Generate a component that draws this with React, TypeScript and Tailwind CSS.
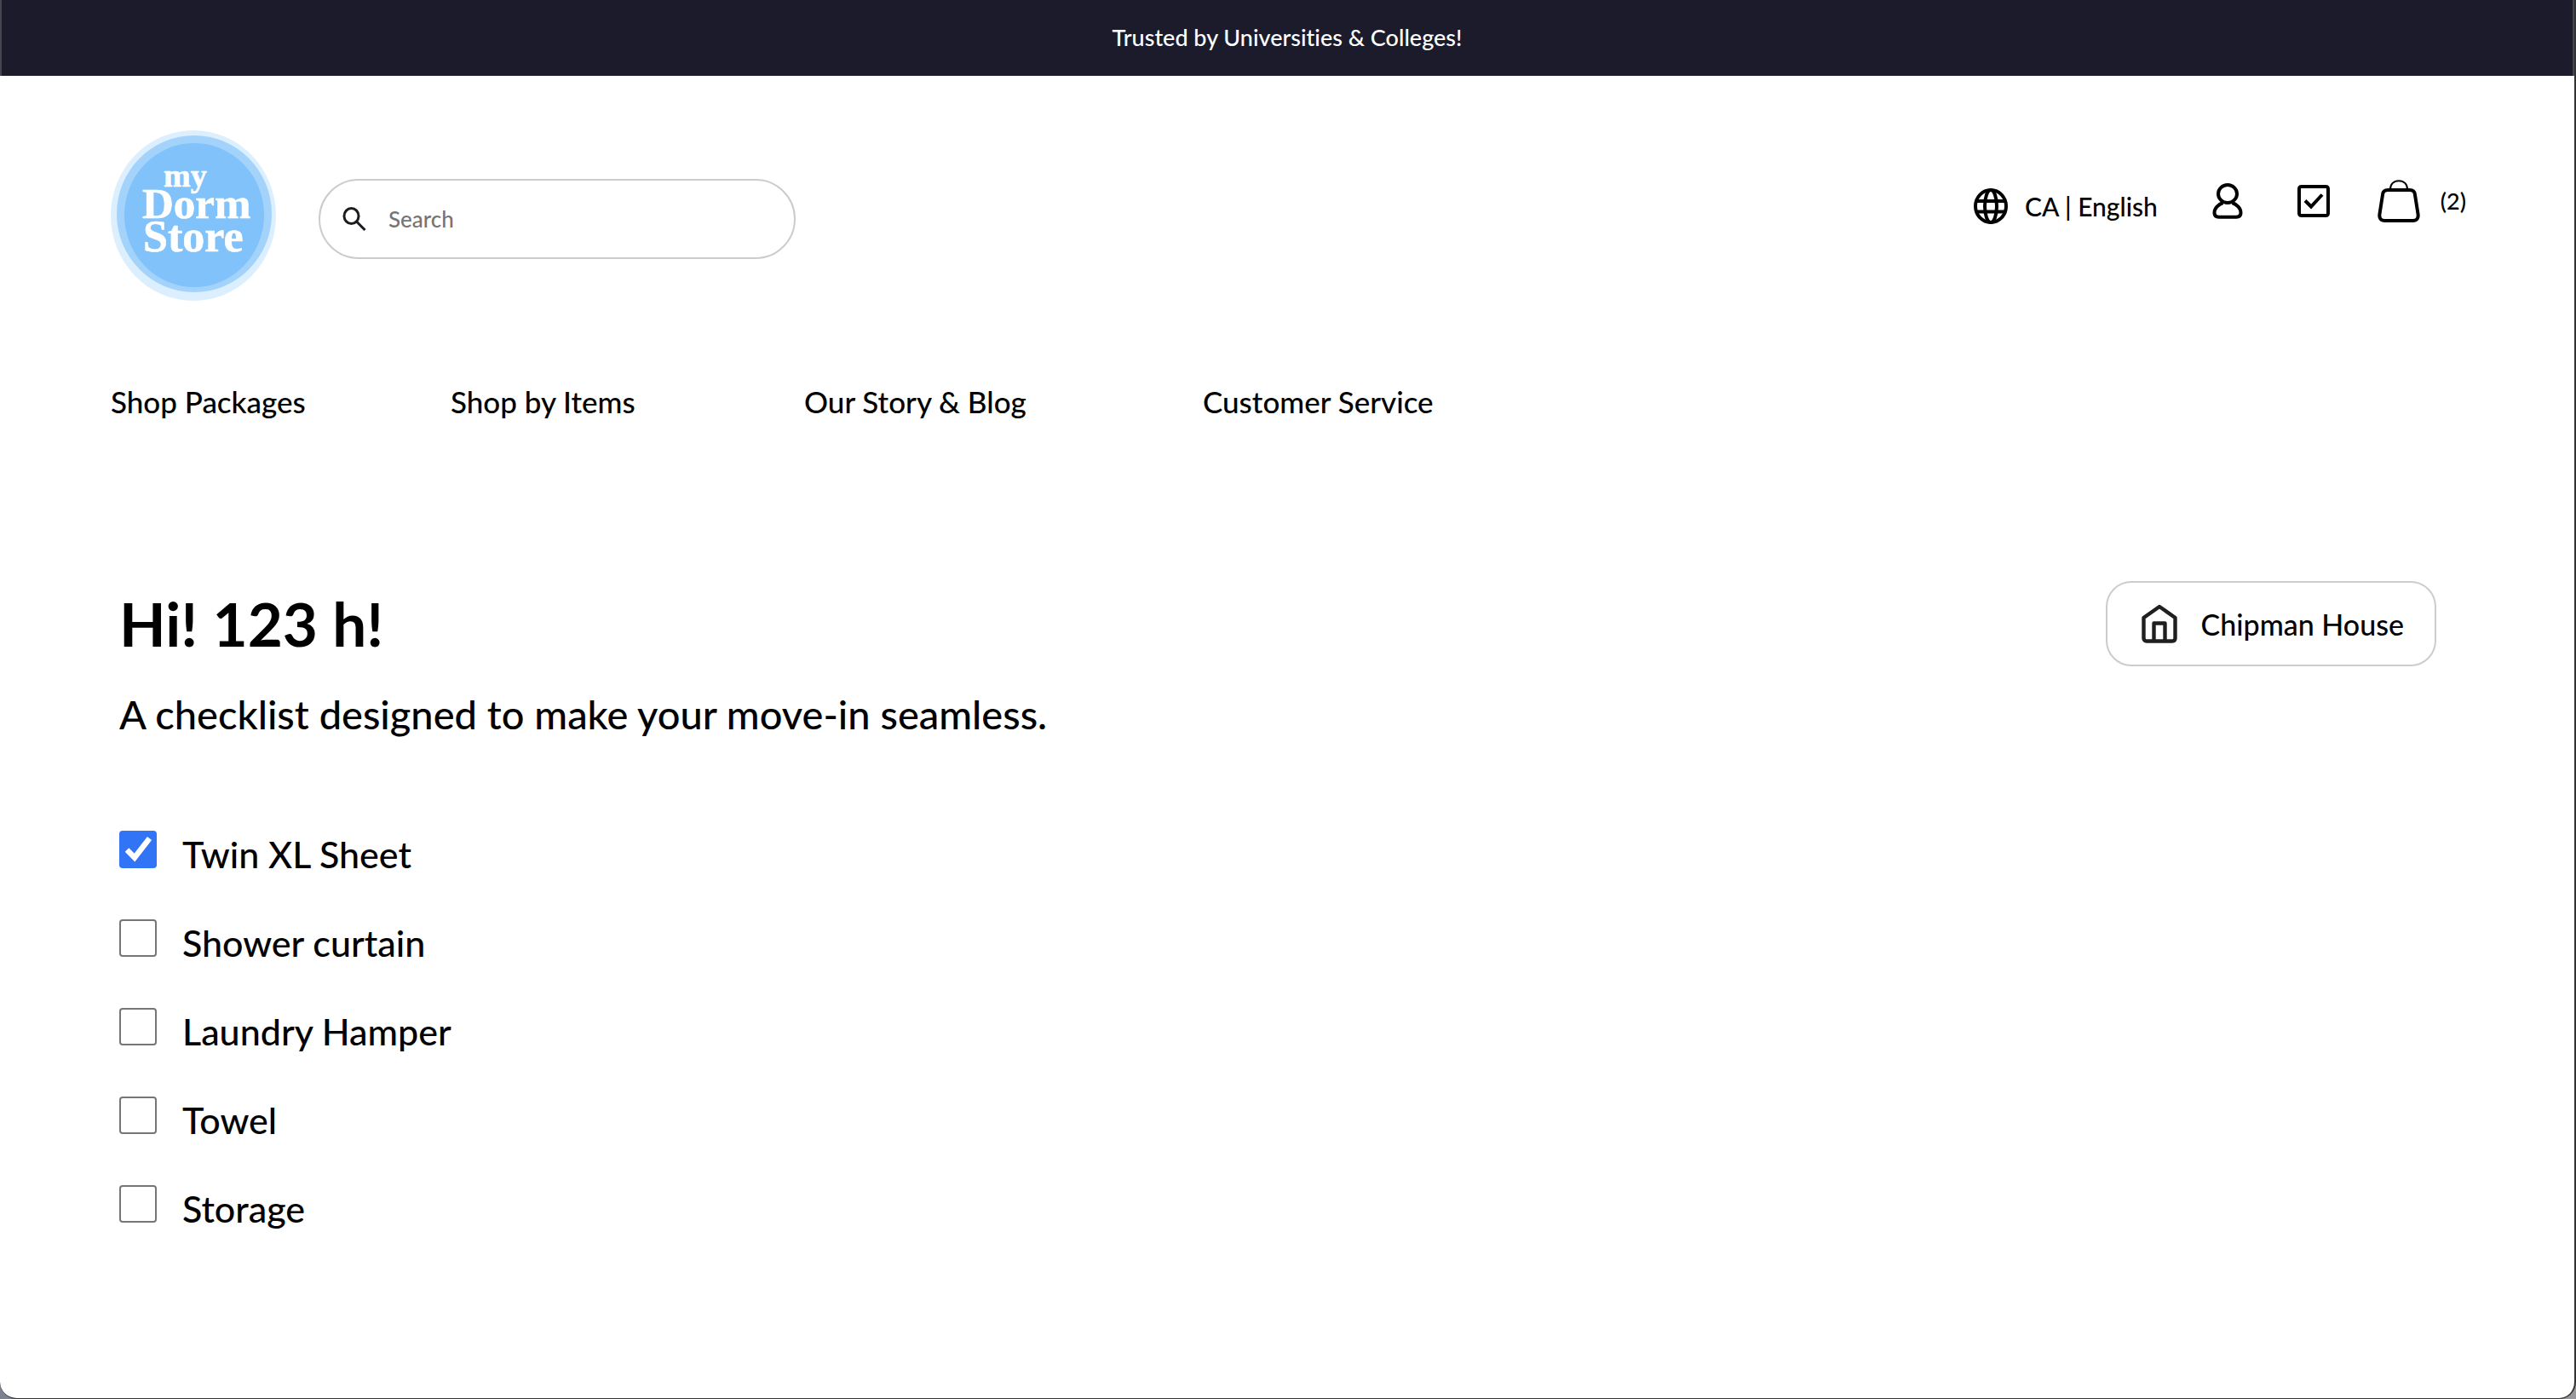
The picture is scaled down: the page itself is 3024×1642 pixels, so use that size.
import { useState } from "react";

const NAV = [
  { label: "Shop Packages", width: "w-[399px]" },
  { label: "Shop by Items", width: "w-[415px]" },
  { label: "Our Story & Blog", width: "w-[468px]" },
  { label: "Customer Service", width: "w-auto" },
];

const ITEMS = ["Twin XL Sheet", "Shower curtain", "Laundry Hamper", "Towel", "Storage"];

function Logo() {
  return (
    <svg viewBox="0 0 194 200" className="h-[200px] w-[194px]" role="img" aria-label="my Dorm Store">
      <ellipse cx="97" cy="100" rx="97" ry="100" fill="#dceffe" />
      <ellipse cx="98" cy="98" rx="91" ry="92" fill="#a3d3fb" />
      <ellipse cx="98" cy="99.500" rx="82" ry="84.500" fill="#80c2f9" />
      <g fill="#fff" stroke="#fff" strokeWidth="0.6" fontFamily="'Liberation Serif', serif" fontWeight="700">
        <text x="62" y="66" fontSize="38">my</text>
        <text x="37" y="103" fontSize="51">Dorm</text>
        <text x="38" y="142" fontSize="52">Store</text>
      </g>
    </svg>
  );
}

function SearchIcon() {
  return (
    <svg viewBox="0 0 28 28" className="h-7 w-7 shrink-0" fill="none" stroke="#1c1b1f" strokeWidth="3">
      <ellipse cx="10.500" cy="10.500" rx="8.500" ry="9" />
      <path d="M16.500 17 26.500 27" />
    </svg>
  );
}

function GlobeIcon() {
  return (
    <svg viewBox="0 0 40 42" className="h-[42px] w-10" fill="none" stroke="#000" strokeWidth="4">
      <ellipse cx="20" cy="21" rx="18" ry="19" />
      <ellipse cx="20" cy="21" rx="7" ry="19" />
      <path d="M3 15h34M3 27.500h34" />
    </svg>
  );
}

function UserIcon() {
  return (
    <svg viewBox="0 0 36 42" className="h-[42px] w-9" fill="none" stroke="#000" strokeWidth="4" strokeLinejoin="round">
      <ellipse cx="18" cy="12.500" rx="11" ry="10.500" />
      <path d="M12.500 23C7 25 2.500 29.500 2.500 34.500c0 3.500 2 5.300 5.500 5.300h20c3.500 0 5.500-1.800 5.500-5.300 0-5-4.500-9.500-10-11.500" />
    </svg>
  );
}

function ChecklistIcon() {
  return (
    <svg viewBox="0 0 38 38" className="h-[38px] w-[38px]" fill="none" stroke="#000">
      <rect x="2" y="2" width="34" height="34" rx="2.500" strokeWidth="4" />
      <path d="M9 18.500 16 25.500 29 11.500" strokeWidth="4" />
    </svg>
  );
}

function BagIcon() {
  return (
    <svg viewBox="0 0 50 50" className="h-[50px] w-[50px]" fill="none" stroke="#000" strokeLinejoin="round">
      <path d="M15 11C15 5 19 1.200 25 1.200S35 5 35 11" strokeWidth="2" />
      <path d="M12 12h26c3.500 0 5.400 1.600 5.900 5l3.600 23c.8 5-1.300 8-6 8H8.500c-4.700 0-6.800-3-6-8L6.100 17c.5-3.400 2.400-5 5.900-5Z" strokeWidth="4" />
    </svg>
  );
}

function HouseIcon() {
  return (
    <svg viewBox="0 0 42 46" className="h-[46px] w-[42px]" fill="none" stroke="#1f1f1f" strokeWidth="4.400" strokeLinejoin="round">
      <path d="M2.500 16 21 3 39.500 16v24c0 2.200-1.200 3.500-3.500 3.500H6c-2.300 0-3.500-1.300-3.500-3.500Z" />
      <path d="M14.500 43V22.500h13V43" />
    </svg>
  );
}

export default function App() {
  const [checked, setChecked] = useState<Record<string, boolean>>({ "Twin XL Sheet": true });

  return (
    <div className="min-h-screen bg-linear-to-r from-[#7d8291] to-[#98989c] font-['Lato',sans-serif] font-medium text-black [font-variant-ligatures:none]">
      <div className="min-h-screen rounded-b-[20px] border-r-2 border-b border-black/80 bg-white">
        <div className="border-x-2 border-[#45454f] bg-[#1b1b2c] pt-6 pb-[25px] text-center text-[27px] leading-10 text-white">
          Trusted by Universities &amp; Colleges!
        </div>

        <header>
          <div className="flex items-start pt-16 pr-[127px] pl-[130px]">
            <a href="#home"><Logo /></a>
            <label className="mt-[57px] ml-[50px] flex h-[94px] w-[560px] items-center gap-[26px] rounded-full border-2 border-[#ccc] pr-6 pl-[26px]">
              <SearchIcon />
              <input
                type="search"
                aria-label="Search"
                placeholder="Search"
                className="w-full min-w-0 bg-transparent text-[26px] outline-none placeholder:text-[#757575]"
              />
            </label>
            <div className="mt-14 ml-auto flex items-start text-[30px]">
              <a href="#locale" className="flex h-[66px] items-center gap-5">
                <GlobeIcon />
                CA | English
              </a>
              <button type="button" aria-label="Account" className="ml-16 flex h-[54px] items-center">
                <UserIcon />
              </button>
              <a href="#checklist" aria-label="Checklist" className="ml-16 flex h-[54px] items-center">
                <ChecklistIcon />
              </a>
              <a href="#cart" aria-label="Cart, 2 items" className="ml-14 flex h-[54px] items-center gap-6 text-[27px]">
                <BagIcon />
                (2)
              </a>
            </div>
          </div>

          <nav className="mt-24 flex pl-[130px] text-[35px] leading-11">
            {NAV.map((n) => (
              <div key={n.label} className={n.width}>
                <a href="#shop">{n.label}</a>
              </div>
            ))}
          </nav>
        </header>

        <main className="mt-[189px] pr-[162px] pl-[140px]">
          <div className="flex items-start justify-between">
            <div>
              <h1 className="mt-2 text-[71px] leading-[84px] font-bold">Hi! 123 h!</h1>
              <p className="mt-9 text-[47px] leading-14">A checklist designed to make your move-in seamless.</p>
            </div>
            <button type="button" className="flex h-[100px] items-center gap-7 rounded-[30px] border-2 border-[#ccc] pr-9 pl-10 text-[34px]">
              <HouseIcon />
              Chipman House
            </button>
          </div>

          <ul className="mt-[109px] flex flex-col gap-12">
            {ITEMS.map((item) => (
              <li key={item}>
                <label className="flex w-fit items-start gap-[30px] text-[43px] leading-14">
                  <span className="relative h-11 w-11">
                    <input
                      type="checkbox"
                      checked={!!checked[item]}
                      onChange={(e) => setChecked({ ...checked, [item]: e.target.checked })}
                      className="peer block h-11 w-11 appearance-none rounded border-2 border-[#767676] bg-white checked:border-[#3174f6] checked:bg-[#3174f6]"
                    />
                    <svg viewBox="0 0 44 44" className="pointer-events-none absolute inset-0 hidden peer-checked:block" fill="none" stroke="#fff" strokeWidth="6.500">
                      <path d="M9 22.500 18 31.500 35.500 9" />
                    </svg>
                  </span>
                  {item}
                </label>
              </li>
            ))}
          </ul>
        </main>
      </div>
    </div>
  );
}
